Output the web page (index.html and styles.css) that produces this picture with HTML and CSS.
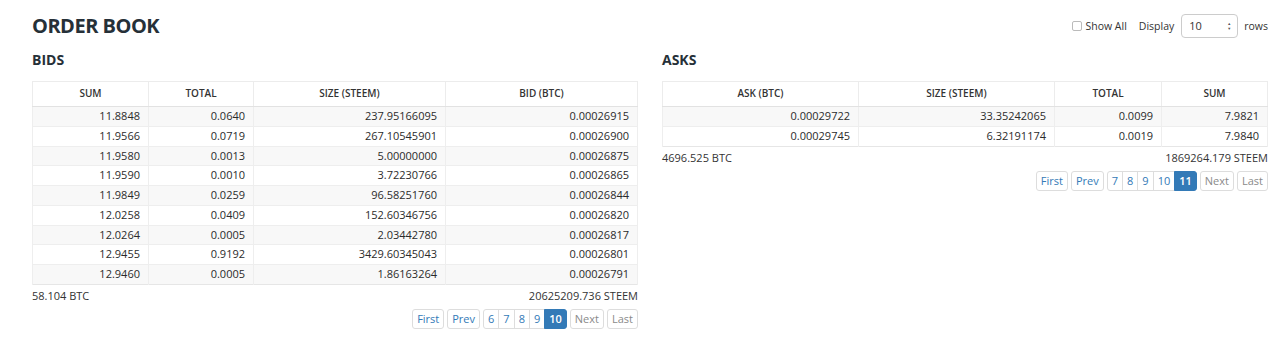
FILE: index.html
```html
<!DOCTYPE html>
<html lang="en">
<head>
    <meta charset="UTF-8">
    <title>Order Book</title>
    <link rel="stylesheet" href="styles.css">
</head>
<body>
<div class="page">
    <div class="top-bar">
        <h1>ORDER BOOK</h1>
        <div class="controls">
            <label class="show-all"><input type="checkbox"> Show All</label>
            <span class="display">Display</span>
            <div class="select">10<span class="arrows">&#9650;<br>&#9660;</span></div>
            <span class="rows">rows</span>
        </div>
    </div>

    <div class="books">
        <div class="book">
            <h2>BIDS</h2>
            <table>
                <thead>
                <tr><th class="c-sum">SUM</th><th class="c-total">TOTAL</th><th class="c-size">SIZE (STEEM)</th><th>BID (BTC)</th></tr>
                </thead>
                <tbody>
                <tr><td>11.8848</td><td>0.0640</td><td>237.95166095</td><td>0.00026915</td></tr>
                <tr><td>11.9566</td><td>0.0719</td><td>267.10545901</td><td>0.00026900</td></tr>
                <tr><td>11.9580</td><td>0.0013</td><td>5.00000000</td><td>0.00026875</td></tr>
                <tr><td>11.9590</td><td>0.0010</td><td>3.72230766</td><td>0.00026865</td></tr>
                <tr><td>11.9849</td><td>0.0259</td><td>96.58251760</td><td>0.00026844</td></tr>
                <tr><td>12.0258</td><td>0.0409</td><td>152.60346756</td><td>0.00026820</td></tr>
                <tr><td>12.0264</td><td>0.0005</td><td>2.03442780</td><td>0.00026817</td></tr>
                <tr><td>12.9455</td><td>0.9192</td><td>3429.60345043</td><td>0.00026801</td></tr>
                <tr><td>12.9460</td><td>0.0005</td><td>1.86163264</td><td>0.00026791</td></tr>
                </tbody>
            </table>
            <div class="totals"><span>58.104 BTC</span><span>20625209.736 STEEM</span></div>
            <div class="pager">
                <a class="btn">First</a>
                <a class="btn">Prev</a>
                <div class="pages">
                    <a>6</a><a>7</a><a>8</a><a>9</a><a class="active">10</a>
                </div>
                <a class="btn disabled">Next</a>
                <a class="btn disabled">Last</a>
            </div>
        </div>

        <div class="book">
            <h2>ASKS</h2>
            <table>
                <thead>
                <tr><th class="c-ask">ASK (BTC)</th><th class="c-asize">SIZE (STEEM)</th><th class="c-atotal">TOTAL</th><th>SUM</th></tr>
                </thead>
                <tbody>
                <tr><td>0.00029722</td><td>33.35242065</td><td>0.0099</td><td>7.9821</td></tr>
                <tr><td>0.00029745</td><td>6.32191174</td><td>0.0019</td><td>7.9840</td></tr>
                </tbody>
            </table>
            <div class="totals"><span>4696.525 BTC</span><span>1869264.179 STEEM</span></div>
            <div class="pager">
                <a class="btn">First</a>
                <a class="btn">Prev</a>
                <div class="pages">
                    <a>7</a><a>8</a><a>9</a><a>10</a><a class="active">11</a>
                </div>
                <a class="btn disabled">Next</a>
                <a class="btn disabled">Last</a>
            </div>
        </div>
    </div>
</div>
</body>
</html>
```

FILE: styles.css
```css
body {
    margin: 0;
    font-family: "Open Sans", "Liberation Sans", sans-serif;
    color: #333;
    background: #fff;
}

.page {
    padding: 8px 12px 0 32px;
}

.top-bar {
    display: flex;
    justify-content: space-between;
    align-items: flex-start;
}

h1 {
    margin: 5px 0 0;
    font-size: 20px;
    font-weight: 700;
    line-height: 26px;
    color: #263038;
    letter-spacing: -0.5px;
}

.controls {
    display: flex;
    align-items: center;
    font-size: 10.5px;
    color: #333;
    margin-top: 6px;
}

.show-all {
    display: flex;
    align-items: center;
    gap: 3px;
}

.show-all input {
    width: 10px;
    height: 10px;
    margin: 0;
    appearance: none;
    border: 1px solid #bbb;
    border-radius: 2px;
    background: #fff;
}

.display {
    margin-left: 12px;
}

.select {
    position: relative;
    box-sizing: border-box;
    width: 57px;
    height: 24px;
    margin-left: 7px;
    padding-left: 7px;
    border: 1px solid #ccc;
    border-radius: 4px;
    line-height: 22px;
    font-size: 11px;
}

.select .arrows {
    position: absolute;
    right: 6px;
    top: 6px;
    font-size: 4px;
    line-height: 5px;
    color: #555;
}

.rows {
    margin-left: 6px;
}

.books {
    display: flex;
    gap: 24px;
}

.book {
    flex: 1;
}

h2 {
    margin: 12px 0 12px;
    font-size: 14px;
    font-weight: 700;
    line-height: 18px;
    color: #263038;
}

table {
    width: 100%;
    border-collapse: collapse;
    border: 1px solid #e6e6e6;
    font-size: 11px;
}

th {
    font-size: 10px;
    font-weight: 600;
    color: #333;
    padding: 6px 8px 7px;
    line-height: 11px;
    border: 1px solid #ececec;
    border-bottom: 1px solid #e2e2e2;
    text-align: center;
    background: #fff;
}

td {
    text-align: right;
    padding: 1px 8px 1px;
    line-height: 16.75px;
    color: #2b2b2b;
    border-top: 1px solid #eee;
    border-left: 1px solid #eee;
    border-right: 1px solid #eee;
}

tbody tr:nth-child(odd) {
    background: #f8f8f8;
}

.c-sum { width: 99px; }
.c-total { width: 88px; }
.c-size { width: 175px; }
.c-ask { width: 179px; }
.c-asize { width: 179px; }
.c-atotal { width: 90px; }

.totals {
    display: flex;
    justify-content: space-between;
    font-size: 11px;
    line-height: 16px;
    margin-top: 3px;
}

.pager {
    display: flex;
    justify-content: flex-end;
    gap: 3px;
    margin-top: 5px;
    font-size: 11px;
}

.pager a {
    display: block;
    box-sizing: border-box;
    height: 20px;
    line-height: 18px;
    border: 1px solid #ddd;
    color: #337ab7;
    background: #fff;
}

.btn {
    padding: 0 4px;
    border-radius: 3px;
}

.btn.disabled {
    color: #8a8a8a;
}

.pages {
    display: flex;
}

.pages a {
    padding: 0 4px;
    margin-left: -1px;
}

.pages a:first-child {
    margin-left: 0;
    border-radius: 3px 0 0 3px;
}

.pages a:last-child {
    border-radius: 0 3px 3px 0;
}

.pages a.active {
    background: #337ab7;
    border-color: #337ab7;
    color: #fff;
    font-weight: 600;
}
```
